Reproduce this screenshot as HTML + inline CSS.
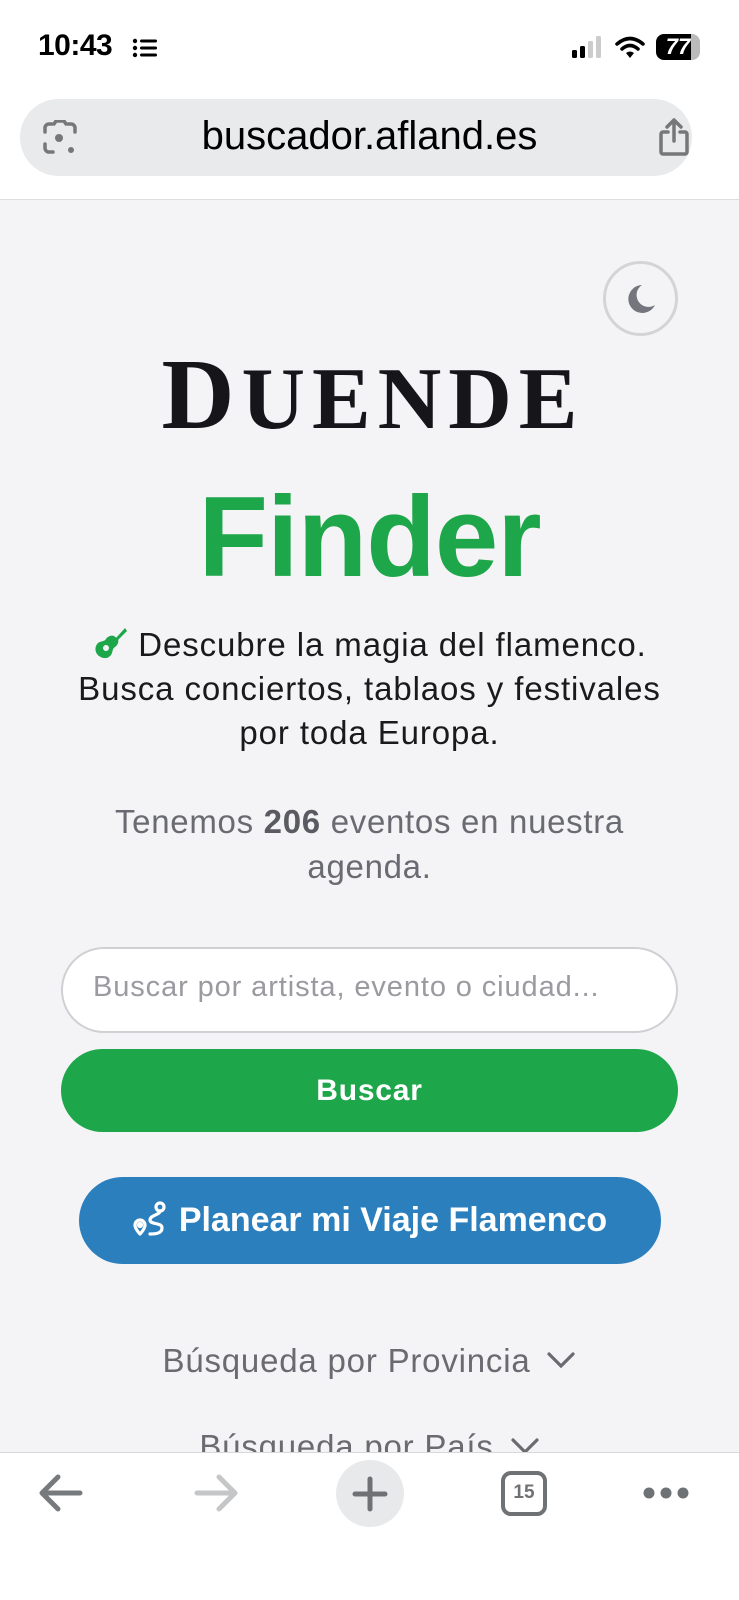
<!DOCTYPE html>
<html><head><meta charset="utf-8"><style>
*{margin:0;padding:0;box-sizing:border-box}
body{width:739px;height:1600px;overflow:hidden;background:#f4f4f6;font-family:"Liberation Sans",sans-serif;position:relative}
.abs{position:absolute}
.c{left:0;width:739px;text-align:center}
</style></head><body>
<div class="abs" style="left:0;top:0;width:739px;height:200px;background:#fff;border-bottom:1px solid #ddd"></div>
<div class="abs" style="left:38px;top:29px;font-size:30px;font-weight:bold;color:#000;letter-spacing:-0.5px">10:43</div>
<svg class="abs" style="left:132px;top:38px" width="26" height="20"><g fill="#000"><circle cx="3" cy="3" r="2.2"/><circle cx="3" cy="10" r="2.2"/><circle cx="3" cy="17" r="2.2"/><rect x="8" y="1.5" width="17" height="3" rx="1.5"/><rect x="8" y="8.5" width="17" height="3" rx="1.5"/><rect x="8" y="15.5" width="17" height="3" rx="1.5"/></g></svg>
<svg class="abs" style="left:572px;top:35px" width="32" height="24"><rect x="0" y="15" width="5" height="8" rx="1.5" fill="#000"/><rect x="8" y="11" width="5" height="12" rx="1.5" fill="#000"/><rect x="16" y="6" width="5" height="17" rx="1.5" fill="#ccc"/><rect x="24" y="1" width="5" height="22" rx="1.5" fill="#ccc"/></svg>
<svg class="abs" style="left:615px;top:35px" width="30" height="24"><path d="M2 9 Q15 -2 28 9" stroke="#000" stroke-width="3.5" fill="none" stroke-linecap="round"/><path d="M7 14 Q15 7 23 14" stroke="#000" stroke-width="3.5" fill="none" stroke-linecap="round"/><path d="M11 18 L15 23 L19 18 Q15 15 11 18Z" fill="#000"/></svg>
<div class="abs" style="left:656px;top:34px;width:44px;height:26px;border-radius:8px;background:linear-gradient(90deg,#000 80%,#bbb 80%);color:#fff;font-weight:bold;font-size:22px;line-height:26px;text-align:center;font-style:italic">77</div>
<div class="abs" style="left:20px;top:99px;width:672px;height:77px;border-radius:39px;background:#e9eaec"></div>
<div class="abs c" style="top:113px;font-size:40px;color:#000;line-height:46px">buscador.afland.es</div>
<svg class="abs" style="left:42px;top:120px" width="36" height="36" fill="none" stroke="#777" stroke-width="3.5" stroke-linecap="round"><path d="M3 12V8a4 4 0 0 1 4-4h3M3 24v4a4 4 0 0 0 4 4h4M26 4h3a4 4 0 0 1 4 4v4"/><path d="M12 4l2-3h8l2 3"/><circle cx="17" cy="18" r="4" fill="#777" stroke="none"/><circle cx="29" cy="30" r="3" fill="#777" stroke="none"/></svg>
<svg class="abs" style="left:657px;top:117px" width="34" height="40" fill="none" stroke="#777" stroke-width="3.5" stroke-linecap="round" stroke-linejoin="round"><path d="M11 15H6a2 2 0 0 0-2 2v18a2 2 0 0 0 2 2h22a2 2 0 0 0 2-2V17a2 2 0 0 0-2-2h-5"/><path d="M17 24V3M10 10l7-7 7 7"/></svg>

<div class="abs" style="left:603px;top:261px;width:75px;height:75px;border-radius:50%;border:3px solid #d4d4d6"></div>
<svg class="abs" style="left:625px;top:283px" width="32" height="32"><path d="M17 2A14 14 0 1 0 30 22 11 11 0 0 1 17 2Z" fill="#75757d"/></svg>

<div class="abs c" style="top:339px;font-family:'Liberation Serif',serif;font-weight:bold;color:#16161a;letter-spacing:7px;line-height:110px;white-space:nowrap;padding-left:7px"><span style="font-size:101px">D</span><span style="font-size:88px">UENDE</span></div>
<div class="abs c" style="top:478px;font-size:114px;font-weight:bold;color:#1ea64a;line-height:120px;letter-spacing:-1px">Finder</div>

<div class="abs c" style="top:623px;font-size:33px;color:#1a1a1a;line-height:44px;letter-spacing:0.9px;white-space:nowrap"><svg width="36" height="34" style="vertical-align:-4px;margin-right:10px" viewBox="0 0 36 34"><path d="M33 2l2 3-9 9-2-2z" fill="#1ea64a"/><path d="M22 10a7 7 0 0 0-8 3c-2 3-6 2-8 4-4 4-3 10 1 13s9 3 12-1c2-3 1-6 4-8a7 7 0 0 0 3-8z" fill="#1ea64a"/><circle cx="14" cy="22" r="3" fill="#f4f4f6"/></svg>Descubre la magia del flamenco.<br>Busca conciertos, tablaos y festivales<br>por toda Europa.</div>

<div class="abs c" style="top:799px;font-size:33px;color:#6a6a72;line-height:45px;letter-spacing:0.7px">Tenemos <b style="color:#5a5a62">206</b> eventos en nuestra<br>agenda.</div>

<div class="abs" style="left:61px;top:947px;width:617px;height:86px;border-radius:43px;border:2px solid #d0d0d4;background:#fff"></div>
<div class="abs" style="left:93px;top:971px;font-size:29px;color:#9a9aa0;letter-spacing:0.9px;white-space:nowrap">Buscar por artista, evento o ciudad...</div>

<div class="abs" style="left:61px;top:1049px;width:617px;height:83px;border-radius:42px;background:#1ea64a;color:#fff;font-weight:bold;font-size:30px;line-height:83px;text-align:center;letter-spacing:0.8px">Buscar</div>

<div class="abs" style="left:79px;top:1177px;width:582px;height:87px;border-radius:44px;background:#2b7fbd;color:#fff;font-weight:bold;font-size:34px;line-height:87px;text-align:center;white-space:nowrap"><svg width="36" height="36" viewBox="0 0 36 36" style="vertical-align:-6px;margin-right:10px" fill="none" stroke="#fff" stroke-width="3.2" stroke-linecap="round" stroke-linejoin="round"><circle cx="27" cy="6" r="4"/><path d="M27 10c0 4-10 4-10 9s12 2 12 8-8 6-12 6"/><path d="M7 33s-5-5-5-9a5 5 0 0 1 10 0c0 4-5 9-5 9z"/><circle cx="7" cy="24" r="1.5" fill="#fff"/></svg>Planear mi Viaje Flamenco</div>

<div class="abs c" style="top:1342px;font-size:33px;color:#6a6a70;letter-spacing:0.8px">Búsqueda por Provincia <svg width="30" height="20" style="vertical-align:2px;margin-left:6px"><path d="M3 4l12 12 12-12" stroke="#6a6a70" stroke-width="3.2" fill="none" stroke-linecap="round"/></svg></div>
<div class="abs c" style="top:1428px;font-size:33px;color:#6a6a70;letter-spacing:0.8px">Búsqueda por País <svg width="30" height="20" style="vertical-align:2px;margin-left:6px"><path d="M3 4l12 12 12-12" stroke="#6a6a70" stroke-width="3.2" fill="none" stroke-linecap="round"/></svg></div>

<div class="abs" style="left:0;top:1452px;width:739px;height:148px;background:#fff;border-top:1.5px solid #d8d8da"></div>
<svg class="abs" style="left:38px;top:1473px" width="46" height="40" fill="none" stroke="#777a7d" stroke-width="5" stroke-linecap="round" stroke-linejoin="round"><path d="M42 20H4M20 4L4 20l16 16"/></svg>
<svg class="abs" style="left:193px;top:1473px" width="46" height="40" fill="none" stroke="#c4c6c8" stroke-width="5" stroke-linecap="round" stroke-linejoin="round"><path d="M4 20h38M26 4l16 16-16 16"/></svg>
<div class="abs" style="left:336px;top:1460px;width:68px;height:67px;border-radius:50%;background:#e8e9eb"></div>
<svg class="abs" style="left:352px;top:1476px" width="36" height="36" stroke="#6f7275" stroke-width="5" stroke-linecap="round"><path d="M18 3v30M3 18h30"/></svg>
<div class="abs" style="left:501px;top:1471px;width:46px;height:45px;border:4.5px solid #6f7275;border-radius:10px;font-size:19px;font-weight:bold;color:#6f7275;text-align:center;line-height:36px">15</div>
<svg class="abs" style="left:643px;top:1486px" width="46" height="14" fill="#6f7275"><circle cx="6" cy="7" r="5.5"/><circle cx="23" cy="7" r="5.5"/><circle cx="40" cy="7" r="5.5"/></svg>
</body></html>
